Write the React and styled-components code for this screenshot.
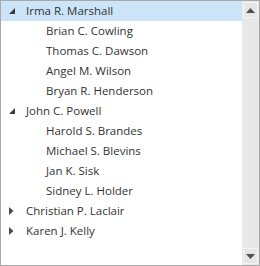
import React from "react";
import styled, { createGlobalStyle } from "styled-components";

const Global = createGlobalStyle`
  html, body { margin: 0; padding: 0; background: #fff; }
  #root { width: 260px; height: 266px; }
`;

const Frame = styled.div`
  box-sizing: border-box;
  width: 260px;
  height: 266px;
  border: 1px solid #a9a9a9;
  display: flex;
  background: #fff;
  font-family: "Open Sans", "Noto Sans", sans-serif;
  font-size: 11.5px;
  color: #333;
`;

const List = styled.div`
  flex: 1;
  display: flex;
  flex-direction: column;
  overflow: hidden;
`;

const Row = styled.div`
  height: 20px;
  display: flex;
  align-items: center;
  padding-left: ${(p) => (p.$level ? 44 : 6)}px;
  background: ${(p) => (p.$selected ? "#cce4f7" : "transparent")};
  white-space: nowrap;
`;

const Toggle = styled.span`
  width: 18px;
  height: 20px;
  display: flex;
  align-items: center;
  justify-content: flex-start;
  flex: none;
`;

const Label = styled.span`
  line-height: 20px;
  padding-left: 1px;
`;

const Scrollbar = styled.div`
  width: 17px;
  flex: none;
  background: #e8e8e8;
  display: flex;
  flex-direction: column;
  justify-content: space-between;
  align-items: center;
  padding: 1px 0;
  box-sizing: border-box;
`;

const ScrollButton = styled.div`
  box-sizing: border-box;
  width: 15px;
  height: 16px;
  border: 1px solid #f4f4f4;
  background: #e6e6e6;
  display: flex;
  align-items: center;
  justify-content: center;
`;

const Expanded = () => (
  <svg width="6" height="6" viewBox="0 0 6 6" style={{ marginLeft: 2 }}>
    <polygon points="6,0 6,6 0,6" fill="#3a3a3a" />
  </svg>
);

const Collapsed = () => (
  <svg width="5" height="8" viewBox="0 0 5 8" style={{ marginLeft: 2 }}>
    <polygon points="0,0 4.5,4 0,8" fill="#4a4a4a" />
  </svg>
);

const Up = () => (
  <svg width="9" height="5" viewBox="0 0 9 5">
    <polygon points="0,5 4.5,0 9,5" fill="#505050" />
  </svg>
);
const Down = () => (
  <svg width="9" height="5" viewBox="0 0 9 5">
    <polygon points="0,0 9,0 4.5,5" fill="#505050" />
  </svg>
);

const data = [
  { name: "Irma R. Marshall", open: true, selected: true, children: ["Brian C. Cowling", "Thomas C. Dawson", "Angel M. Wilson", "Bryan R. Henderson"] },
  { name: "John C. Powell", open: true, children: ["Harold S. Brandes", "Michael S. Blevins", "Jan K. Sisk", "Sidney L. Holder"] },
  { name: "Christian P. Laclair", open: false, children: [] },
  { name: "Karen J. Kelly", open: false, children: [] },
];

export default function App() {
  return (
    <>
      <Global />
      <Frame>
        <List>
          {data.map((n) => (
            <React.Fragment key={n.name}>
              <Row $selected={n.selected}>
                <Toggle>{n.open ? <Expanded /> : <Collapsed />}</Toggle>
                <Label>{n.name}</Label>
              </Row>
              {n.open &&
                n.children.map((c) => (
                  <Row key={c} $level={1}>
                    <Label>{c}</Label>
                  </Row>
                ))}
            </React.Fragment>
          ))}
        </List>
        <Scrollbar>
          <ScrollButton><Up /></ScrollButton>
          <ScrollButton><Down /></ScrollButton>
        </Scrollbar>
      </Frame>
    </>
  );
}
